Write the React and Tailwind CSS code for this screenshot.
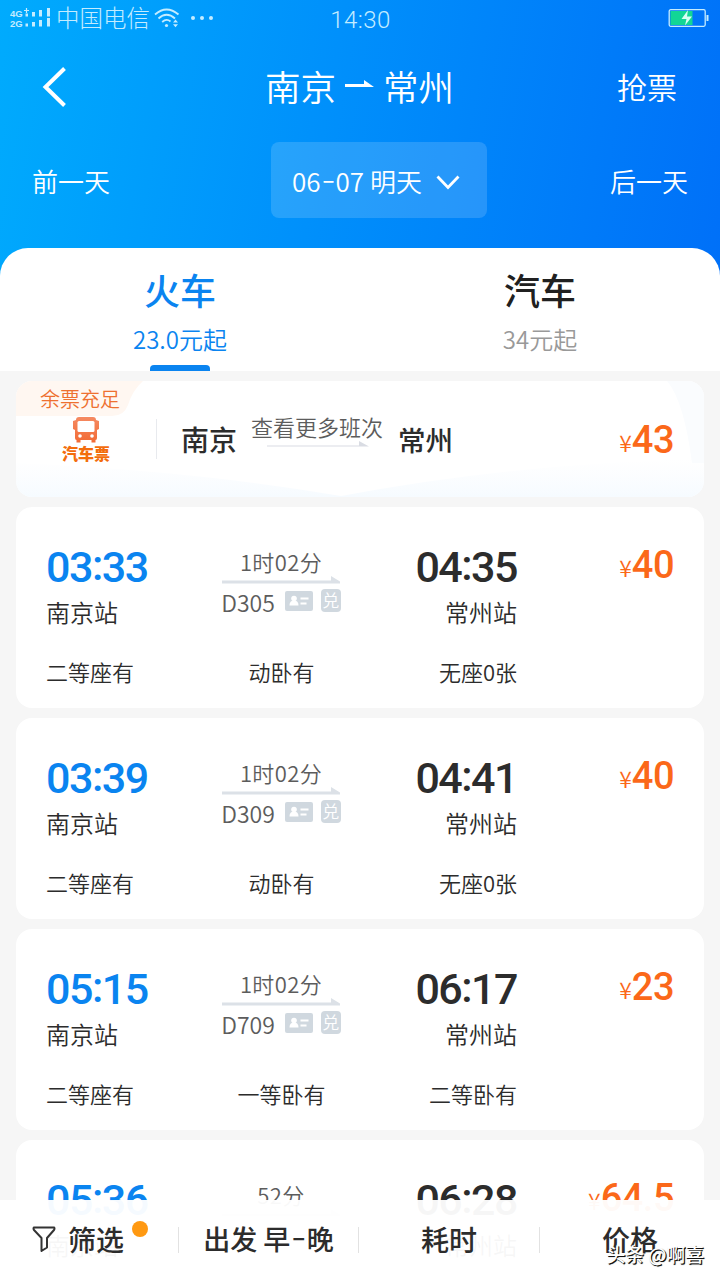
import React from 'react';

const TRAINS = [
  { id: 1, depart: '03:33', arrive: '04:35', duration: '1时02分', no: 'D305', price: '40', seats: ['二等座有', '动卧有', '无座0张'] },
  { id: 2, depart: '03:39', arrive: '04:41', duration: '1时02分', no: 'D309', price: '40', seats: ['二等座有', '动卧有', '无座0张'] },
  { id: 3, depart: '05:15', arrive: '06:17', duration: '1时02分', no: 'D709', price: '23', seats: ['二等座有', '一等卧有', '二等卧有'] },
  { id: 4, depart: '05:36', arrive: '06:28', duration: '52分', price: '64.5' },
];

function StatusBar() {
  return (
    <div className="flex h-9 items-center justify-between pl-2.5 pr-[11px] text-[#c4ecff]">
      <div className="flex w-[206px] items-center">
        <svg width="42" height="20" viewBox="0 0 42 20" fill="currentColor">
          <text x="0" y="9" fontSize="9.5" fontWeight="700" fontFamily="Liberation Sans">4G</text>
          <text x="0" y="18.500" fontSize="9.5" fontWeight="700" fontFamily="Liberation Sans">2G</text>
          <path d="M14 2.500h5M16.500 0v5" stroke="currentColor" strokeWidth="1.200" />
          <path d="M15.500 5.500h2.500v3h-2.500zM22 4h3v4.500h-3zM29 2h3v6.500h-3zM37 0h3v8.500h-3zM15.500 15.500h2.500v3h-2.500zM22 14h3v4.500h-3zM29 12h3v6.500h-3zM37 10h3v8.500h-3z" />
        </svg>
        <span className="-mt-0.5 ml-1 whitespace-nowrap text-[23.5px] font-light leading-9">中国电信</span>
        <svg className="ml-1 shrink-0" width="26" height="20" viewBox="0 0 26 20" fill="none" stroke="currentColor" strokeWidth="1.8">
          <path d="M1 6.500Q12.500-3.500 24.500 6.500M4.500 10.500Q12.500 3 21 10.500M8.200 14Q12.500 10 16.500 13.500" />
          <circle cx="12.500" cy="17.500" r="1.600" fill="currentColor" stroke="none" />
          <path d="M19 14.500l2.500-3 2.500 3zM19 16.200l2.500 3 2.500-3z" fill="currentColor" stroke="none" />
        </svg>
        <div className="ml-[11px] flex gap-[5px]">
          <i className="size-1 rounded-full bg-current" />
          <i className="size-1 rounded-full bg-current" />
          <i className="size-1 rounded-full bg-current" />
        </div>
      </div>
      <span className="ml-0.5 mt-1 font-['Roboto'] text-[24px] font-light leading-8 tracking-[0.4px]">14:30</span>
      <div className="flex w-[206px] justify-end">
        <svg width="41" height="18" viewBox="0 0 41 18">
          <rect x="1.200" y="0.700" width="36" height="16.600" rx="1.500" fill="none" stroke="#c4ecff" strokeWidth="1.300" />
          <rect x="2.500" y="2" width="22" height="14" fill="#12d695" />
          <path d="M20 1l-6.500 9h5l-1.500 6.500 7-9h-5z" fill="#d8fff4" />
          <path d="M39.500 6v6" stroke="#c4ecff" strokeWidth="2" />
        </svg>
      </div>
    </div>
  );
}

function Header() {
  return (
    <header className="h-[276px] shrink-0 bg-[linear-gradient(100deg,#00abfd_0%,#0090fb_45%,#0070f8_100%)] font-[350] text-white">
      <StatusBar />
      <div className="flex h-[102px] items-center justify-between pl-[42px] pr-[43px]">
        <div className="w-[100px]">
          <svg width="26" height="40" viewBox="0 0 26 40" fill="none" stroke="white" strokeWidth="4">
            <path d="M22.500 1.500L3.500 20L22.500 38.500" />
          </svg>
        </div>
        <div className="-mt-0.5 flex items-center text-[35.500px] leading-[52px]">
          <span>南京</span>
          <svg className="mx-[9px] mb-1" width="29" height="8" viewBox="0 0 29 8" fill="white">
            <path d="M0 4H19V0L29 7H0z" />
          </svg>
          <span>常州</span>
        </div>
        <span className="-mt-0.5 w-[100px] text-right text-[30px] leading-[44px]">抢票</span>
      </div>
      <div className="mt-1 flex h-[76px] items-center px-8 text-[26px]">
        <span className="w-[239px]">前一天</span>
        <div className="flex h-[76px] w-[216px] items-center justify-center rounded-lg bg-white/15 pr-1.5">
          <span className="whitespace-nowrap">
            06<span className="relative -top-[3px] mx-[3px] inline-block scale-x-150">-</span>07 明天
          </span>
          <svg className="ml-3.5 mt-1" width="24" height="15" viewBox="0 0 24 15" fill="none" stroke="white" strokeWidth="2.800">
            <path d="M1.500 1.500L12 12.500L22.500 1.500" />
          </svg>
        </div>
        <span className="ml-auto">后一天</span>
      </div>
    </header>
  );
}

function Tabs() {
  return (
    <div className="relative -mt-7 grid h-[123px] shrink-0 grid-cols-2 rounded-t-[28px] bg-white text-center">
      <div className="flex flex-col items-center text-[#0a84f0]">
        <span className="mt-[15px] text-[36px] font-medium leading-[52px]">火车</span>
        <span className="mt-[7px] text-[24px] font-[350] leading-[34px]">23.0元起</span>
        <i className="mt-auto h-1.5 w-[60px] rounded-t-sm bg-[#0a84f0]" />
      </div>
      <div className="flex flex-col items-center">
        <span className="mt-[15px] text-[36px] font-medium leading-[52px] text-[#202020]">汽车</span>
        <span className="mt-[7px] text-[24px] font-[350] leading-[34px] text-[#999]">34元起</span>
      </div>
    </div>
  );
}

function Price({ value }) {
  return (
    <div className="flex items-baseline whitespace-nowrap leading-[44px] text-[#fb6819]">
      <span className="relative -top-px text-[23px] font-[350]">¥</span>
      <span className="font-['Roboto'] text-[38px] font-medium tracking-[-0.5px]">{value}</span>
    </div>
  );
}

function Time({ value }) {
  const [hours, minutes] = value.split(':');
  return (
    <p className="font-['Roboto'] text-[43px] font-medium leading-[44px] tracking-[-1.5px]">
      {hours}
      <span className="relative -top-[2px]">:</span>
      {minutes}
    </p>
  );
}

function BusCard() {
  return (
    <div className="relative flex h-[116px] shrink-0 overflow-hidden rounded-2xl bg-white">
      <svg className="absolute inset-0" width="688" height="116" viewBox="0 0 688 116">
        <defs>
          <linearGradient id="fade" x1="0" y1="0" x2="0" y2="1">
            <stop offset="0" stopColor="#f8fbfe" stopOpacity="0" />
            <stop offset="1" stopColor="#f6fbff" />
          </linearGradient>
          <linearGradient id="bus" x1="0" y1="0" x2="0" y2="1">
            <stop offset="0" stopColor="#f58a62" />
            <stop offset="1" stopColor="#f26a34" />
          </linearGradient>
        </defs>
        <path d="M0 82Q180 90 325 115Q500 82 688 78V116H0z" fill="url(#fade)" />
        <path d="M651 0Q668 20 676 82H688V0z" fill="#fafcfe" />
        <path d="M0 0H127Q116 10 112 24Q108 35 96 35H0z" fill="#fff7f1" />
      </svg>
      <div className="relative flex w-[140px] flex-col items-center">
        <span className="ml-[-12px] mt-1 text-[20px] font-[350] leading-7 text-[#ee7030]">余票充足</span>
        <svg className="mt-1" width="28" height="26" viewBox="0 0 28 26">
          <path d="M4 3Q4 0 7 0H21Q24 0 24 3L27 4V12L25 13V21Q25 23 23.500 23V25.500H19.500V23H8.500V25.500H4.500V23Q3 23 3 21V13L1 12V4L4 3z" fill="url(#bus)" />
          <rect x="5.500" y="4" width="17" height="11" rx="1.500" fill="white" />
          <circle cx="8" cy="19" r="1.800" fill="white" />
          <circle cx="20" cy="19" r="1.800" fill="white" />
        </svg>
        <span className="-mt-px text-[16px] font-black leading-[22px] text-[#f36d0d]">汽车票</span>
      </div>
      <div className="relative mt-[38px] h-10 w-px bg-[#e8eaee]" />
      <div className="relative ml-6 flex h-[116px] text-[27.5px] font-medium text-[#2c2c2c]">
        <span className="mt-[38px] text-[28px] leading-10">南京</span>
        <div className="ml-3.5 mt-[29px] flex w-[132px] flex-col">
          <span className="whitespace-nowrap text-[22px] font-[350] leading-8 text-[#5c5c5c]">查看更多班次</span>
          <svg className="ml-4 -mt-0.5" width="102" height="7" viewBox="0 0 102 7" fill="#d9dce3">
            <path d="M0 5.500H92V1L102 6.500H0z" />
          </svg>
        </div>
        <span className="ml-[15px] mt-[38px] leading-10">常州</span>
      </div>
      <div className="relative ml-auto mr-[30px] mt-[37px]">
        <Price value="43" />
      </div>
    </div>
  );
}

function TrainCard({ train }) {
  return (
    <div className="flex h-[201px] shrink-0 rounded-2xl bg-white pl-[30px] pr-[30px]">
      <div className="w-[471px] pt-[38px] font-[350] text-[#2c2c2c]">
        <div className="flex h-[86px] justify-between">
          <div className="w-[118px]">
            <div className="text-[#0a84f0]">
              <Time value={train.depart} />
            </div>
            <p className="mt-[5px] text-[24px] leading-9">南京站</p>
          </div>
          <div className="-ml-px flex w-[120px] flex-col items-center pt-0.5 text-[22px] text-[#5c5c5c]">
            <span className="leading-7 tracking-[0.4px]">{train.duration}</span>
            <svg width="118" height="8" viewBox="0 0 118 8" fill="#dce1e7" className="mt-px">
              <path d="M0 4.500H109V0L118 5.500V7.500H0z" />
            </svg>
            {train.no && (
              <div className="mt-[5px] flex items-center leading-7">
                <span className="-mt-0.5 text-[23px]">{train.no}</span>
                <svg className="mb-1 ml-2.5 shrink-0" width="28" height="20" viewBox="0 0 28 20">
                  <rect width="28" height="20" rx="2" fill="#d0d8df" />
                  <circle cx="9" cy="7.500" r="2.800" fill="white" />
                  <path d="M4.500 14.500Q4.500 9.500 9 9.500T13.500 14.500z" fill="white" />
                  <path d="M15.500 7.500h8M15.500 12.500h6" stroke="white" strokeWidth="2.200" />
                </svg>
                <span className="mb-1 ml-2 flex h-[23px] w-5 shrink-0 items-center justify-center rounded bg-[#d0d8df] pb-0.5 text-[17px] leading-none text-white">兑</span>
              </div>
            )}
          </div>
          <div className="w-[118px] text-right">
            <div className="text-[#2c2c2c]">
              <Time value={train.arrive} />
            </div>
            <p className="mt-[5px] text-[24px] leading-9">常州站</p>
          </div>
        </div>
        {train.seats && (
          <div className="mt-6 grid grid-cols-3 text-[22px] leading-8">
            <span>{train.seats[0]}</span>
            <span className="text-center">{train.seats[1]}</span>
            <span className="text-right">{train.seats[2]}</span>
          </div>
        )}
      </div>
      <div className="ml-auto pt-9">
        <Price value={train.price} />
      </div>
    </div>
  );
}

function FilterBar() {
  return (
    <nav className="absolute inset-x-0 bottom-0 grid h-20 grid-cols-[178px_180px_181px_181px] items-center bg-white/96 text-[28px] font-medium leading-10 text-[#2c2c2c]">
      <div className="relative flex h-20 items-center pl-8">
        <svg className="-mt-0.5" width="24" height="26" viewBox="0 0 24 26" fill="none" stroke="#333" strokeWidth="2" strokeLinejoin="round">
          <path d="M2 1.500H22Q23 2 22 4L15 12V21.500L9.500 25V12L2 4Q1 2 2 1.500z" />
        </svg>
        <span className="-mt-0.5 ml-3">筛选</span>
        <i className="absolute left-[132px] top-[21px] size-4 rounded-full bg-[#ff9912]" />
      </div>
      <div className="flex h-[26px] items-center justify-center whitespace-nowrap border-l border-[#e2e2e2] text-[27px]">
        <span className="-mt-0.5">
          出发 早<span className="relative -top-[3px] mx-[3.5px] inline-block scale-x-150">-</span>晚
        </span>
      </div>
      <div className="flex h-[26px] items-center justify-center border-l border-[#e2e2e2]">
        <span className="-mt-0.5">耗时</span>
      </div>
      <div className="flex h-[26px] items-center justify-center border-l border-[#e2e2e2]">
        <span className="-mt-0.5">价格</span>
      </div>
      <span className="absolute bottom-3 right-4 whitespace-nowrap text-[18.800px] font-medium leading-7 text-white [text-shadow:1px_1px_0_#111,1px_1px_1px_#333]">
        头条 @啊喜
      </span>
    </nav>
  );
}

export default function App() {
  return (
    <div className="relative flex h-[1280px] w-[720px] flex-col overflow-hidden bg-[#f6f6f6] font-['Noto_Sans_CJK_SC',sans-serif]">
      <Header />
      <Tabs />
      <main className="flex flex-col gap-2.5 px-4 pt-2.5">
        <BusCard />
        {TRAINS.map((train) => (
          <TrainCard key={train.id} train={train} />
        ))}
      </main>
      <FilterBar />
    </div>
  );
}
